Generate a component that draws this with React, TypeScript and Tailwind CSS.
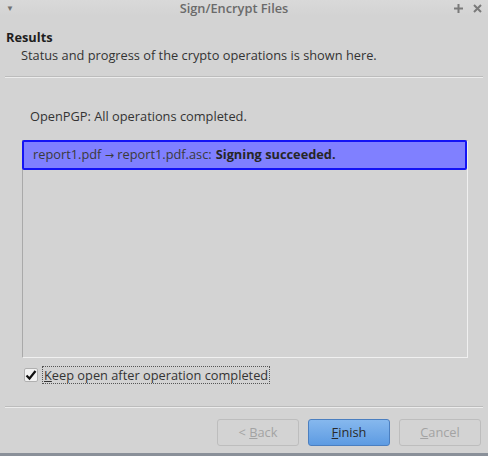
import { useState } from 'react';

const App = () => {
    const [keepOpen, setKeepOpen] = useState(true);

    return (
        <div className="w-[488px] h-[456px] bg-[#d3d3d3] flex flex-col text-[12.8px] text-[#2e2e2e] overflow-hidden" style={{ fontFamily: '"Open Sans", "Liberation Sans", sans-serif' }}>
            {/* Title bar */}
            <div className="h-[16px] flex items-center px-[6px] bg-gradient-to-b from-[#d9d9d9] to-[#d3d3d3]">
                <span className="text-[8px] text-[#707070] w-[20px] leading-none">▼</span>
                <span className="flex-1 text-center font-semibold text-[#6a6a6a] leading-[16px]">Sign/Encrypt Files</span>
                <span className="w-[40px] flex justify-end gap-[10px] text-[#7a7a7a] leading-none">
                    <svg width="9" height="9" viewBox="0 0 9 9"><path d="M4.5 0v9M0 4.5h9" stroke="#7a7a7a" strokeWidth="2" /></svg>
                    <svg width="9" height="9" viewBox="0 0 9 9"><path d="M1 1l7 7M8 1L1 8" stroke="#7a7a7a" strokeWidth="2" /></svg>
                </span>
            </div>

            {/* Header */}
            <div className="px-[6px] pt-[12px]">
                <div className="font-bold text-[#1e1e1e] leading-[18px]">Results</div>
                <div className="pl-[15px] leading-[18px] text-[#333]">Status and progress of the crypto operations is shown here.</div>
            </div>
            <div className="mx-[5px] mt-[12px] h-[2px] border-t border-[#bcbcbc] border-b border-b-[#ececec]" />

            {/* Body */}
            <div className="px-[22px] flex flex-col flex-1">
                <div className="pl-[8px] mt-[29px] leading-[18px] text-[#333]">OpenPGP: All operations completed.</div>
                <div className="mt-[15px] h-[218px] w-[446px] border border-t-[#a9a9a9] border-l-[#a9a9a9] border-r-[#f0f0f0] border-b-[#f0f0f0] bg-[#d3d3d3]">
                    <div className="h-[30px] bg-[#8080ff] border-2 border-[#1414f5] rounded-[2px] -mt-px -ml-px flex items-center pl-[9px] text-[#3a3a3a]">
                        <span>report1.pdf <span className="text-[11px]" style={{ fontFamily: '"DejaVu Sans", sans-serif' }}>→</span> report1.pdf.asc: </span>
                        <span className="font-bold ml-[4px] text-[#262626]">Signing succeeded.</span>
                    </div>
                </div>

                <label className="mt-[8px] flex items-center gap-[4px] ml-[2px]">
                    <button
                        onClick={() => setKeepOpen(!keepOpen)}
                        className="w-[14px] h-[14px] bg-[#f2f2f2] border border-[#b0b0b0] rounded-[2px] flex items-center justify-center"
                    >
                        {keepOpen && (
                            <svg width="12" height="12" viewBox="0 0 12 12"><path d="M1.5 6.5l3 3L10.5 2" fill="none" stroke="#111" strokeWidth="2.2" /></svg>
                        )}
                    </button>
                    <span className="border border-dotted border-[#555] px-[1px] leading-[16px] text-[#333]">
                        <span className="underline">K</span>eep open after operation completed
                    </span>
                </label>
            </div>

            <div className="mx-[5px] h-[2px] border-t border-[#bcbcbc] border-b border-b-[#ececec]" />

            {/* Buttons */}
            <div className="flex justify-end gap-[9px] pr-[7px] pt-[11px] pb-[7px]">
                <button className="w-[82px] h-[27px] rounded-[3px] border border-[#bdbdbd] bg-[#d3d3d3] text-[#a3a3a3]">
                    &lt; <span className="underline">B</span>ack
                </button>
                <button className="w-[82px] h-[27px] rounded-[3px] border border-[#4b7fc0] bg-gradient-to-b from-[#86b8ee] to-[#5d9be2] text-[#2a2a2a]">
                    <span className="underline">F</span>inish
                </button>
                <button className="w-[82px] h-[27px] rounded-[3px] border border-[#bdbdbd] bg-[#d3d3d3] text-[#a3a3a3]">
                    <span className="underline">C</span>ancel
                </button>
            </div>
            <div className="h-[3px] bg-[#8a9099]" />
        </div>
    );
};

export default App;
